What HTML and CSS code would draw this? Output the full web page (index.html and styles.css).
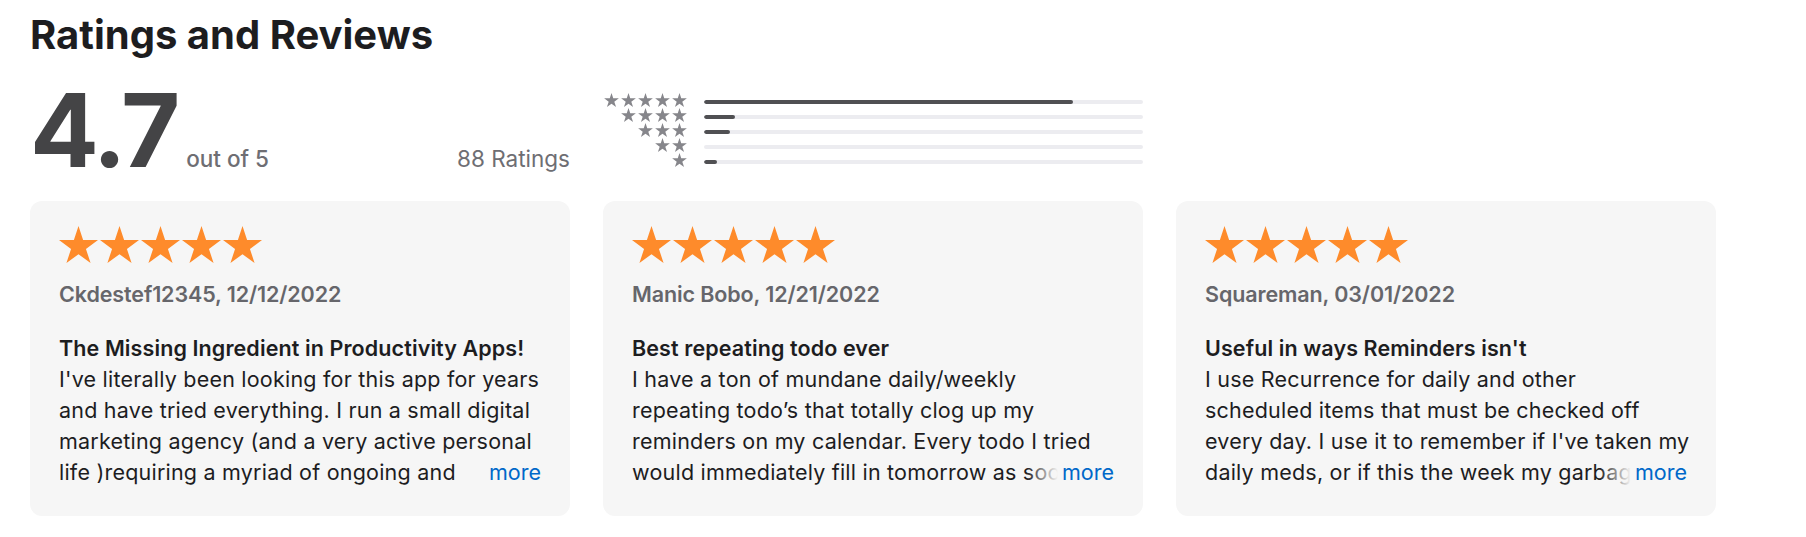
FILE: index.html
```html
<!DOCTYPE html>
<html lang="en">
<head>
<meta charset="utf-8">
<title>Ratings and Reviews</title>
<link rel="stylesheet" href="styles.css">
</head>
<body>
<svg class="defs" width="0" height="0" aria-hidden="true">
  <defs>
    <symbol id="star" viewBox="2.45 0 95.1 90.45">
      <polygon points="50,0 61.23,34.55 97.55,34.55 68.16,55.9 79.39,90.45 50,69.1 20.61,90.45 31.84,55.9 2.45,34.55 38.77,34.55"/>
    </symbol>
  </defs>
</svg>
<section class="ratings">
  <h2 class="title">Ratings and Reviews</h2>

  <div class="summary">
    <div class="average">
      <div class="score">
        <span class="score-big">4.7</span>
        <span class="score-max">out of 5</span>
      </div>
      <span class="count">88 Ratings</span>
    </div>
    <div class="histogram">
      <div class="hist-row">
        <div class="hist-stars"><svg><use href="#star"/></svg><svg><use href="#star"/></svg><svg><use href="#star"/></svg><svg><use href="#star"/></svg><svg><use href="#star"/></svg></div>
        <div class="bar"><div class="fill" style="width:84%"></div></div>
      </div>
      <div class="hist-row">
        <div class="hist-stars"><svg><use href="#star"/></svg><svg><use href="#star"/></svg><svg><use href="#star"/></svg><svg><use href="#star"/></svg></div>
        <div class="bar"><div class="fill" style="width:7%"></div></div>
      </div>
      <div class="hist-row">
        <div class="hist-stars"><svg><use href="#star"/></svg><svg><use href="#star"/></svg><svg><use href="#star"/></svg></div>
        <div class="bar"><div class="fill" style="width:6%"></div></div>
      </div>
      <div class="hist-row">
        <div class="hist-stars"><svg><use href="#star"/></svg><svg><use href="#star"/></svg></div>
        <div class="bar"><div class="fill" style="width:0%"></div></div>
      </div>
      <div class="hist-row">
        <div class="hist-stars"><svg><use href="#star"/></svg></div>
        <div class="bar"><div class="fill" style="width:3%"></div></div>
      </div>
    </div>
  </div>

  <div class="reviews">
    <article class="card">
      <div class="stars"><svg><use href="#star"/></svg><svg><use href="#star"/></svg><svg><use href="#star"/></svg><svg><use href="#star"/></svg><svg><use href="#star"/></svg></div>
      <div class="author">Ckdestef12345, 12/12/2022</div>
      <h3 class="review-title">The Missing Ingredient in Productivity Apps!</h3>
      <div class="body-wrap">
        <p class="review-body">I've literally been looking for this app for years<br>and have tried everything. I run a small digital<br>marketing agency (and a very active personal<br>life )requiring a myriad of ongoing and recurring tasks that need to be done on a schedule.</p>
        <a class="more" href="#">more</a>
      </div>
    </article>
    <article class="card">
      <div class="stars"><svg><use href="#star"/></svg><svg><use href="#star"/></svg><svg><use href="#star"/></svg><svg><use href="#star"/></svg><svg><use href="#star"/></svg></div>
      <div class="author">Manic Bobo, 12/21/2022</div>
      <h3 class="review-title">Best repeating todo ever</h3>
      <div class="body-wrap">
        <p class="review-body">I have a ton of mundane daily/weekly<br>repeating todo’s that totally clog up my<br>reminders on my calendar. Every todo I tried<br>would immediately fill in tomorrow as soon as I checked off today’s task.</p>
        <a class="more" href="#">more</a>
      </div>
    </article>
    <article class="card">
      <div class="stars"><svg><use href="#star"/></svg><svg><use href="#star"/></svg><svg><use href="#star"/></svg><svg><use href="#star"/></svg><svg><use href="#star"/></svg></div>
      <div class="author">Squareman, 03/01/2022</div>
      <h3 class="review-title">Useful in ways Reminders isn't</h3>
      <div class="body-wrap">
        <p class="review-body">I use Recurrence for daily and other<br>scheduled items that must be checked off<br>every day. I use it to remember if I've taken my<br>daily meds, or if this the week my garbage goes out.</p>
        <a class="more" href="#">more</a>
      </div>
    </article>
  </div>
</section>
</body>
</html>
```

FILE: styles.css
```css
* { box-sizing: border-box; }

html, body {
  margin: 0;
  padding: 0;
  background: #ffffff;
}

body {
  font-family: Inter, "Noto Sans", "Liberation Sans", sans-serif;
  color: #1d1d1f;
  -webkit-font-smoothing: antialiased;
}

.defs {
  position: absolute;
  width: 0;
  height: 0;
  overflow: hidden;
}

.ratings {
  padding: 0 30px;
}

.title {
  margin: 13px 0 0 0;
  font-size: 40px;
  line-height: 44px;
  font-weight: 700;
  letter-spacing: 0;
  color: #1d1d1f;
}

.summary {
  display: grid;
  grid-template-columns: 540px 540px;
  column-gap: 33px;
  margin-top: 22px;
  height: 102px;
}

.average {
  display: flex;
  align-items: baseline;
  justify-content: space-between;
}

.score {
  display: flex;
  align-items: baseline;
}

.score-big {
  font-size: 102px;
  line-height: 102px;
  font-weight: 700;
  letter-spacing: -0.03em;
  color: #444446;
}

.score-max {
  margin-left: 9px;
  font-size: 22.5px;
  font-weight: 500;
  color: #6e6e73;
}

.count {
  font-size: 22.5px;
  font-weight: 400;
  color: #6e6e73;
}

.histogram {
  display: flex;
  flex-direction: column;
  padding-top: 13px;
}

.hist-row {
  display: flex;
  align-items: center;
  height: 15.2px;
}

.hist-stars {
  width: 84px;
  display: flex;
  justify-content: flex-end;
  gap: 2px;
}

.hist-stars svg {
  width: 15px;
  height: 14px;
  fill: #86868b;
}

.bar {
  flex: 1;
  height: 4px;
  margin-left: 17px;
  margin-top: 4px;
  border-radius: 2px;
  background: #ececf0;
  overflow: hidden;
}

.fill {
  height: 100%;
  background: #505053;
  border-radius: 2px;
}

.reviews {
  display: grid;
  grid-template-columns: repeat(3, 540px);
  column-gap: 33px;
  margin-top: 20px;
}

.card {
  background: #f6f6f6;
  border-radius: 12px;
  padding: 24px 26px 29px 29px;
  height: 315px;
}

.stars {
  display: flex;
  gap: 2px;
  height: 39px;
}

.stars svg {
  width: 39px;
  height: 39px;
  fill: #fe8b2b;
}

.author {
  margin-top: 17px;
  font-size: 21.5px;
  line-height: 26px;
  font-weight: 600;
  color: #66666b;
  letter-spacing: -0.005em;
}

.review-title {
  margin: 26px 0 0 0;
  font-size: 21.5px;
  line-height: 31px;
  font-weight: 600;
  color: #1d1d1f;
  letter-spacing: 0.005em;
  white-space: nowrap;
}

.body-wrap {
  position: relative;
}

.review-body {
  margin: 0;
  font-size: 21.5px;
  line-height: 31px;
  font-weight: 400;
  color: #1d1d1f;
  letter-spacing: 0.01em;
  max-height: 124px;
  overflow: hidden;
}

.more {
  position: absolute;
  right: 0;
  bottom: 0;
  padding-left: 36px;
  padding-right: 3px;
  font-size: 21.5px;
  line-height: 31px;
  color: #0068c9;
  text-decoration: none;
  background: linear-gradient(to right, rgba(246, 246, 246, 0) 0, #f6f6f6 32px);
}
```
